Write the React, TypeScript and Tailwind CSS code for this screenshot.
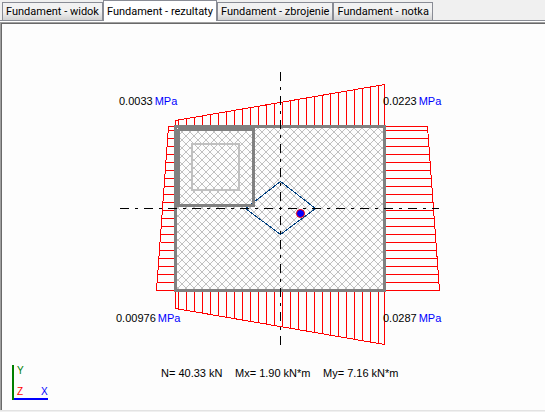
import { useState } from "react";

const tabs = [
  { id: "widok", label: "Fundament - widok" },
  { id: "rezultaty", label: "Fundament - rezultaty" },
  { id: "zbrojenie", label: "Fundament - zbrojenie" },
  { id: "notka", label: "Fundament - notka" },
];

// Footing outline in drawing units
const left = 175;
const right = 384;
const top = 126;
const bottom = 290;

// Length of the pressure arrows at each end of a side
const pressure = {
  top: [6, 42],
  bottom: [18, 54],
  left: [7, 19],
  right: [43, 55],
};

const steps = (first: number, end: number) => {
  const list: number[] = [];
  for (let value = first; value < end; value += 8) list.push(value);
  return list;
};

const columns = steps(178, right);
const rows = steps(130, bottom);

const hatchPath = [0, 1, 2, 3, 4, 5, 6, 7]
  .map((i) => `M${i} ${i}h1v1h-1zM${7 - i} ${i}h1v1h-1z`)
  .join("");

const at = (range: number[], ratio: number) =>
  Math.round(range[0] + (range[1] - range[0]) * ratio);

const PressureLines = () => {
  const acrossRatio = (x: number) => (x - left) / (right - left);
  const downRatio = (y: number) => (y - top) / (bottom - top);

  return (
    <g stroke="#ff0000" fill="none" transform="translate(0.5 0.5)" shapeRendering="crispEdges">
      {columns.map((x) => (
        <g key={x}>
          <path d={`M${x} ${top}V${top - at(pressure.top, acrossRatio(x))}`} />
          <path d={`M${x} ${bottom}V${bottom + at(pressure.bottom, acrossRatio(x))}`} />
        </g>
      ))}
      {rows.map((y) => (
        <g key={y}>
          <path d={`M${left} ${y}H${left - at(pressure.left, downRatio(y))}`} />
          <path d={`M${right} ${y}H${right + at(pressure.right, downRatio(y))}`} />
        </g>
      ))}
      <path d="M175 126V120L384 84V126" />
      <path d="M175 290V308L384 344V290" />
      <path d="M175 126H168L156 290H175" />
      <path d="M384 126H427L439 290H384" />
    </g>
  );
};

const Label = ({ x, y, value }: { x: number; y: number; value: string }) => (
  <text x={x} y={y} fill="#000000">
    {value}
    <tspan dx="2" fill="#0000ff">MPa</tspan>
  </text>
);

const Drawing = () => (
  <svg
    viewBox="2 24 543 386"
    className="block w-full"
    fontFamily="'Liberation Sans', Arial, sans-serif"
    fontSize="11"
    role="img"
    aria-label="Fundament - rezultaty"
  >
    <defs>
      <pattern id="hatch" x="2" y="24" width="8" height="8" patternUnits="userSpaceOnUse">
        <path d={hatchPath} fill="#c0c0c0" shapeRendering="crispEdges" />
      </pattern>
    </defs>
    <rect x="175" y="126" width="210" height="165" fill="url(#hatch)" />
    <PressureLines />
    <rect x="192" y="144" width="47" height="46" fill="none" stroke="#c0c0c0" strokeWidth="2" />
    <path
      d="M245.5 208.5L280.5 181.5L315.5 208.5L280.5 234.5Z"
      fill="none"
      stroke="#004080"
      shapeRendering="crispEdges"
    />
    <g fill="none" stroke="#808080" strokeWidth="3">
      <rect x="175.5" y="126.5" width="209" height="164" />
      <rect x="178.5" y="129.5" width="75" height="76" />
    </g>
    <rect x="177" y="128" width="1" height="1" fill="#ffffff" />
    <g stroke="#000000" strokeDasharray="9 6 3 6" shapeRendering="crispEdges">
      <path d="M120 208.5H439" />
      <path d="M280.5 72V345" />
    </g>
    <circle cx="300.5" cy="213.5" r="4" fill="#0000ff" stroke="#ff0000" />
    <Label x={119} y={105} value="0.0033" />
    <Label x={383} y={105} value="0.0223" />
    <Label x={116} y={322} value="0.00976" />
    <Label x={383} y={322} value="0.0287" />
    <text x="161" y="377">N= 40.33 kN</text>
    <text x="235" y="377">Mx= 1.90 kN*m</text>
    <text x="323" y="377">My= 7.16 kN*m</text>
    <path d="M13 365V400" stroke="#008000" strokeWidth="2" />
    <path d="M14 399H48" stroke="#0000ff" strokeWidth="2" />
    <g fontSize="10">
      <text x="17" y="374" fill="#008000">Y</text>
      <text x="17" y="395" fill="#ff0000">Z</text>
      <text x="41" y="395" fill="#0000ff">X</text>
    </g>
  </svg>
);

const App: React.FC = () => {
  const [active, setActive] = useState("rezultaty");

  return (
    <div className="min-h-screen bg-[#f0f0f0] text-black">
      <div
        role="tablist"
        className="flex h-[21px] items-end border-b border-[#898c95] pl-[2px] font-[Roboto,sans-serif]"
      >
        {tabs.map((tab) => (
          <button
            key={tab.id}
            role="tab"
            aria-selected={active === tab.id}
            onClick={() => setActive(tab.id)}
            className={
              active === tab.id
                ? "-mb-px h-[21px] border border-b-0 border-[#898c95] bg-white px-[3px] text-[11px] leading-none whitespace-nowrap"
                : "h-[18px] border border-b-0 border-[#898c95] bg-gradient-to-b from-[#f2f2f2] from-50% to-[#d2d2d2] px-[3px] text-[11px] leading-none whitespace-nowrap"
            }
          >
            {tab.label}
          </button>
        ))}
      </div>
      <main className="border-t border-b border-t-white border-b-[#e3e3e3] bg-[#fdfdfd]">
        <div className="border-t border-l border-[#a0a0a0]">
          <div className="border-t border-l border-[#696969]">
            <Drawing />
          </div>
        </div>
      </main>
    </div>
  );
};

export default App;
